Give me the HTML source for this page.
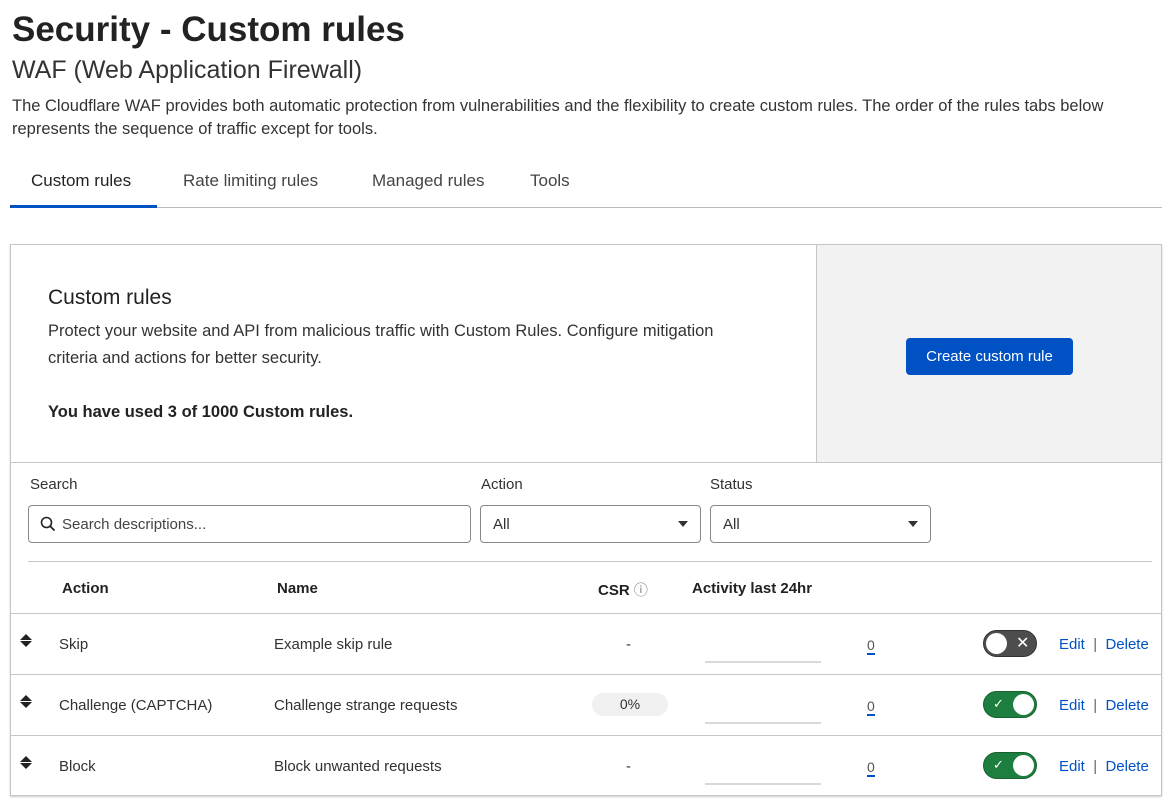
<!DOCTYPE html>
<html><head><meta charset="utf-8"><style>
*{box-sizing:border-box;margin:0;padding:0}
body{width:1171px;height:805px;background:#fff;font-family:"Liberation Sans",sans-serif;color:#313131;position:relative;overflow:hidden}
.a{position:absolute;white-space:nowrap}
.l{color:#0051c3}
.t{font-size:15px}
.tog{position:absolute;width:54px;height:27px;border-radius:14px}
.knob{position:absolute;top:3px;width:21px;height:21px;border-radius:50%;background:#fff}
.bar{position:absolute;width:116px;height:2px;background:#d9d9d9}
.zero{position:absolute;font-size:14px;color:#555;border-bottom:2px solid #0051c3;line-height:15px}
</style></head><body>
<div class="a" style="left:12px;top:10px;font-size:35px;font-weight:bold;color:#222">Security - Custom rules</div>
<div class="a" style="left:12px;top:56px;font-size:25px;color:#333">WAF (Web Application Firewall)</div>
<div class="a" style="left:12px;top:95px;font-size:16.5px;line-height:23px;white-space:normal;width:1100px;color:#333">The Cloudflare WAF provides both automatic protection from vulnerabilities and the flexibility to create custom rules. The order of the rules tabs below represents the sequence of traffic except for tools.</div>
<div class="a" style="left:31px;top:171px;font-size:17px;color:#222">Custom rules</div>
<div class="a" style="left:183px;top:171px;font-size:17px;color:#444">Rate limiting rules</div>
<div class="a" style="left:372px;top:171px;font-size:17px;color:#444">Managed rules</div>
<div class="a" style="left:530px;top:171px;font-size:17px;color:#444">Tools</div>
<div class="a" style="left:10px;top:207px;width:1152px;height:1px;background:#bbb"></div>
<div class="a" style="left:10px;top:205px;width:147px;height:3px;background:#0051c3"></div>

<div class="a" style="left:10px;top:244px;width:1152px;height:552px;border:1px solid #c6c6c6;box-shadow:0 1px 2px rgba(0,0,0,.2)"></div>
<div class="a" style="left:816px;top:245px;width:345px;height:217px;background:#f2f2f2;border-left:1px solid #c6c6c6"></div>
<div class="a" style="left:11px;top:462px;width:1150px;height:1px;background:#c6c6c6"></div>
<div class="a" style="left:48px;top:286px;font-size:21px;color:#222">Custom rules</div>
<div class="a" style="left:48px;top:318px;font-size:16.5px;line-height:27px;color:#333">Protect your website and API from malicious traffic with Custom Rules. Configure mitigation<br>criteria and actions for better security.</div>
<div class="a" style="left:48px;top:403px;font-size:16.5px;font-weight:bold;color:#222">You have used 3 of 1000 Custom rules.</div>
<div class="a" style="left:906px;top:338px;width:167px;height:37px;background:#0051c3;border-radius:4px;color:#fff;font-size:15px;text-align:center;line-height:37px">Create custom rule</div>

<div class="a t" style="left:30px;top:476px">Search</div>
<div class="a t" style="left:481px;top:476px">Action</div>
<div class="a t" style="left:710px;top:476px">Status</div>
<div class="a" style="left:28px;top:505px;width:443px;height:38px;border:1px solid #888;border-radius:4px"></div>
<svg class="a" style="left:40px;top:516px" width="16" height="16" viewBox="0 0 16 16"><circle cx="6.5" cy="6.5" r="5" fill="none" stroke="#222" stroke-width="1.6"/><path d="M10 10l4.5 4.5" stroke="#222" stroke-width="1.8"/></svg>
<div class="a t" style="left:62px;top:516px;color:#444">Search descriptions...</div>
<div class="a" style="left:480px;top:505px;width:221px;height:38px;border:1px solid #888;border-radius:4px"></div>
<div class="a t" style="left:493px;top:516px">All</div>
<div class="a" style="left:678px;top:521px;border:5px solid transparent;border-top:6px solid #333"></div>
<div class="a" style="left:710px;top:505px;width:221px;height:38px;border:1px solid #888;border-radius:4px"></div>
<div class="a t" style="left:723px;top:516px">All</div>
<div class="a" style="left:908px;top:521px;border:5px solid transparent;border-top:6px solid #333"></div>
<div class="a" style="left:28px;top:561px;width:1124px;height:1px;background:#c6c6c6"></div>

<div class="a t" style="left:62px;top:580px;font-weight:bold;color:#222">Action</div>
<div class="a t" style="left:277px;top:580px;font-weight:bold;color:#222">Name</div>
<div class="a t" style="left:598px;top:580px;font-weight:bold;color:#222">CSR <span style="font-weight:normal;color:#777;font-size:14px">ⓘ</span></div>
<div class="a t" style="left:692px;top:580px;font-weight:bold;color:#222">Activity last 24hr</div>
<div class="a" style="left:11px;top:613px;width:1150px;height:1px;background:#c6c6c6"></div>
<div class="a" style="left:11px;top:674px;width:1150px;height:1px;background:#c6c6c6"></div>
<div class="a" style="left:11px;top:735px;width:1150px;height:1px;background:#c6c6c6"></div>

<div class="a" style="left:20px;top:634px;border:6px solid transparent;border-bottom:6px solid #222;border-top:0"></div><div class="a" style="left:20px;top:641px;border:6px solid transparent;border-top:6px solid #222;border-bottom:0"></div>
<div class="a t" style="left:59px;top:636px">Skip</div>
<div class="a t" style="left:274px;top:636px">Example skip rule</div>
<div class="a t" style="left:626px;top:636px">-</div>
<div class="bar" style="left:705px;top:661px"></div><div class="zero" style="left:867px;top:638px">0</div>
<div class="tog" style="left:983px;top:630px;background:#4d4d4d;border:1px solid #333"><div class="knob" style="left:2px;top:2px"></div><span class="a" style="left:32px;top:2px;color:#fff;font-size:16px">✕</span></div>
<div class="a t" style="left:1059px;top:636px"><span class="l">Edit</span> <span style="color:#666">&nbsp;|&nbsp;</span> <span class="l">Delete</span></div>

<div class="a" style="left:20px;top:695px;border:6px solid transparent;border-bottom:6px solid #222;border-top:0"></div><div class="a" style="left:20px;top:702px;border:6px solid transparent;border-top:6px solid #222;border-bottom:0"></div>
<div class="a t" style="left:59px;top:697px">Challenge (CAPTCHA)</div>
<div class="a t" style="left:274px;top:697px">Challenge strange requests</div>
<div class="a" style="left:592px;top:693px;width:76px;height:23px;border-radius:12px;background:#f0f0f0;font-size:14px;text-align:center;line-height:23px">0%</div>
<div class="bar" style="left:705px;top:722px"></div><div class="zero" style="left:867px;top:699px">0</div>
<div class="tog" style="left:983px;top:691px;background:#1e7e3f;border:1px solid #17602f"><div class="knob" style="left:29px;top:2px"></div><span class="a" style="left:9px;top:4px;color:#fff;font-size:13px">✓</span></div>
<div class="a t" style="left:1059px;top:697px"><span class="l">Edit</span> <span style="color:#666">&nbsp;|&nbsp;</span> <span class="l">Delete</span></div>

<div class="a" style="left:20px;top:756px;border:6px solid transparent;border-bottom:6px solid #222;border-top:0"></div><div class="a" style="left:20px;top:763px;border:6px solid transparent;border-top:6px solid #222;border-bottom:0"></div>
<div class="a t" style="left:59px;top:758px">Block</div>
<div class="a t" style="left:274px;top:758px">Block unwanted requests</div>
<div class="a t" style="left:626px;top:758px">-</div>
<div class="bar" style="left:705px;top:783px"></div><div class="zero" style="left:867px;top:760px">0</div>
<div class="tog" style="left:983px;top:752px;background:#1e7e3f;border:1px solid #17602f"><div class="knob" style="left:29px;top:2px"></div><span class="a" style="left:9px;top:4px;color:#fff;font-size:13px">✓</span></div>
<div class="a t" style="left:1059px;top:758px"><span class="l">Edit</span> <span style="color:#666">&nbsp;|&nbsp;</span> <span class="l">Delete</span></div>
</body></html>
